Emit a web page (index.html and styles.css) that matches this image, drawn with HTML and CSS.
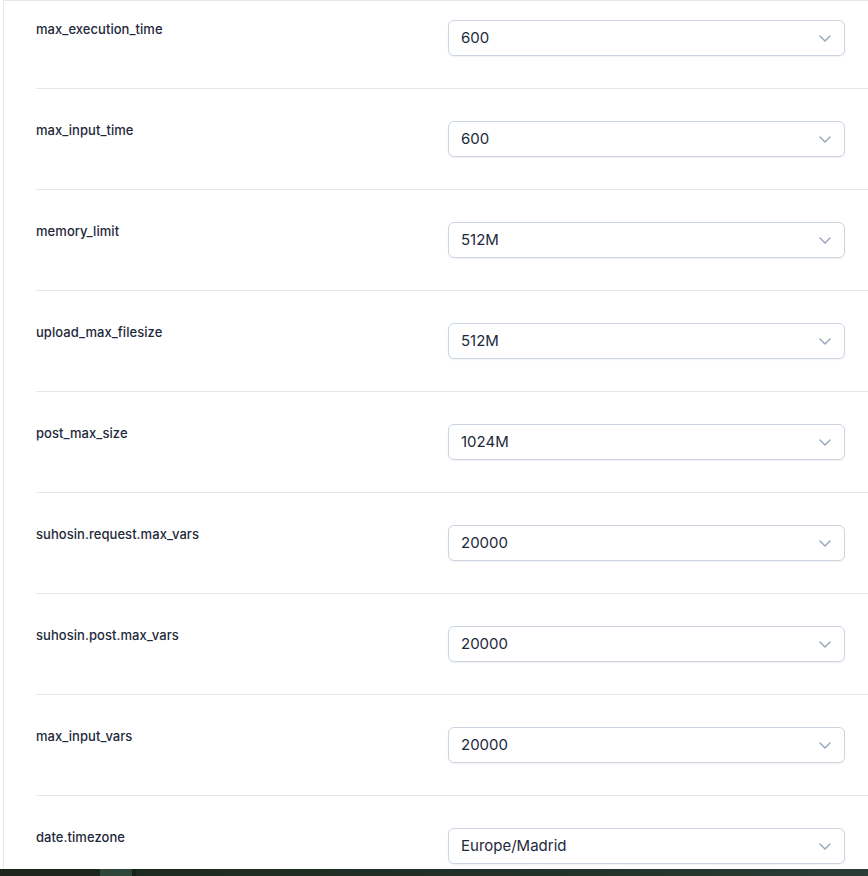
FILE: index.html
```html
<!DOCTYPE html>
<html>
<head>
<meta charset="utf-8">
<link rel="stylesheet" href="styles.css">
</head>
<body>
<div class="panel">
  <div class="row">
    <div class="label">max_execution_time</div>
    <div class="select"><span>600</span><svg class="chev" viewBox="0 0 12 7"><path d="M1 1l5 5 5-5"/></svg></div>
  </div>
  <div class="row">
    <div class="label">max_input_time</div>
    <div class="select"><span>600</span><svg class="chev" viewBox="0 0 12 7"><path d="M1 1l5 5 5-5"/></svg></div>
  </div>
  <div class="row">
    <div class="label">memory_limit</div>
    <div class="select"><span>512M</span><svg class="chev" viewBox="0 0 12 7"><path d="M1 1l5 5 5-5"/></svg></div>
  </div>
  <div class="row">
    <div class="label">upload_max_filesize</div>
    <div class="select"><span>512M</span><svg class="chev" viewBox="0 0 12 7"><path d="M1 1l5 5 5-5"/></svg></div>
  </div>
  <div class="row">
    <div class="label">post_max_size</div>
    <div class="select"><span>1024M</span><svg class="chev" viewBox="0 0 12 7"><path d="M1 1l5 5 5-5"/></svg></div>
  </div>
  <div class="row">
    <div class="label">suhosin.request.max_vars</div>
    <div class="select"><span>20000</span><svg class="chev" viewBox="0 0 12 7"><path d="M1 1l5 5 5-5"/></svg></div>
  </div>
  <div class="row">
    <div class="label">suhosin.post.max_vars</div>
    <div class="select"><span>20000</span><svg class="chev" viewBox="0 0 12 7"><path d="M1 1l5 5 5-5"/></svg></div>
  </div>
  <div class="row">
    <div class="label">max_input_vars</div>
    <div class="select"><span>20000</span><svg class="chev" viewBox="0 0 12 7"><path d="M1 1l5 5 5-5"/></svg></div>
  </div>
  <div class="row">
    <div class="label">date.timezone</div>
    <div class="select"><span>Europe/Madrid</span><svg class="chev" viewBox="0 0 12 7"><path d="M1 1l5 5 5-5"/></svg></div>
  </div>
</div>
<div class="taskbar">
  <div class="tb-a"></div>
  <div class="tb-b"></div>
  <div class="tb-c"></div>
  <div class="tb-d"></div>
</div>
</body>
</html>
```
FILE: styles.css
```css
html, body {
  margin: 0;
  padding: 0;
  background: #ffffff;
  height: 876px;
  overflow: hidden;
}
body {
  font-family: Inter, "Noto Sans", sans-serif;
  color: #1e293b;
}
.panel {
  margin-left: 3px;
  border-left: 1px solid #e5e8ee;
  border-top: 1px solid #e5e8ee;
  padding-left: 32px;
}
.row {
  display: flex;
  align-items: flex-start;
  padding: 32px 0 32px;
  border-bottom: 1px solid #e2e8f0;
}
.row:first-child {
  padding-top: 19px;
}
.label {
  width: 412px;
  flex: none;
  font-size: 13px;
  font-weight: 500;
  line-height: 16px;
  letter-spacing: 0.05px;
  padding-top: 1px;
  color: #1e293b;
}
.select {
  width: 397px;
  height: 36px;
  box-sizing: border-box;
  border: 1px solid #cbd5e1;
  border-radius: 6px;
  box-shadow: 0 1px 2px rgba(15, 23, 42, 0.06);
  display: flex;
  align-items: center;
  justify-content: space-between;
  padding: 0 13px 0 12px;
  font-size: 15px;
  color: #1e293b;
}
.select span {
  margin-top: -1px;
}
.chev {
  width: 12px;
  height: 7px;
  fill: none;
  stroke: #94a3b8;
  stroke-width: 1.4;
  stroke-linecap: round;
  stroke-linejoin: round;
}
.taskbar {
  position: fixed;
  left: 0;
  right: 0;
  bottom: 0;
  height: 7px;
  display: flex;
}
.tb-a { width: 100px; background: #1c261c; }
.tb-b { width: 32px; background: #2f473a; }
.tb-c { width: 4px; background: #18211c; }
.tb-d { flex: 1; background: linear-gradient(90deg, #1d2a20, #223329 60%, #2b3c37); }
```
